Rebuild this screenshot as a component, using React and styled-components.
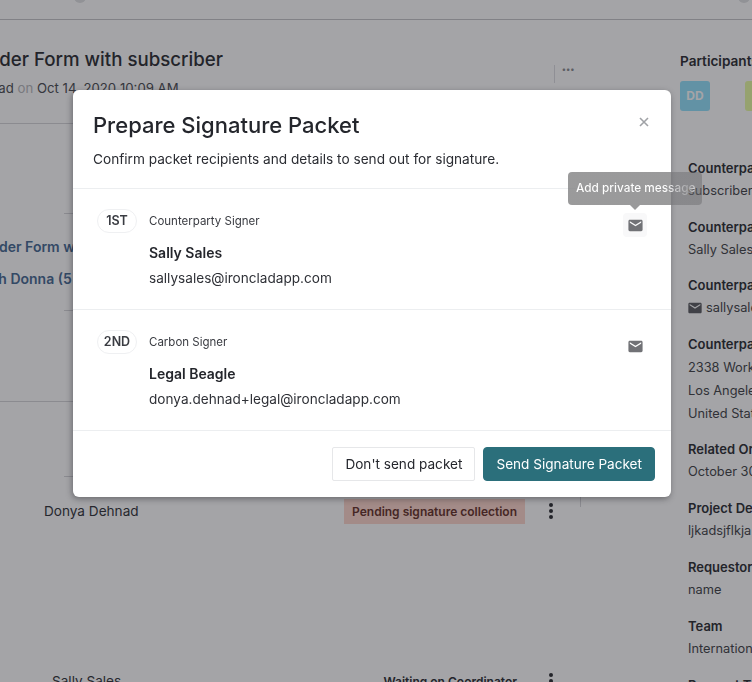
import React from "react";
import styled, { createGlobalStyle } from "styled-components";

const GlobalStyle = createGlobalStyle`
  html, body {
    margin: 0;
    height: 100%;
    overflow: hidden;
    background: #fff;
    font-family: Inter, "Noto Sans", sans-serif;
    color: #24262c;
  }
  * { box-sizing: border-box; }
`;

const Page = styled.div`
  width: 752px;
  height: 682px;
  overflow: hidden;
`;

const TopBar = styled.div`
  display: flex;
  justify-content: space-between;
  height: 20px;
  padding: 0 2px 0 74px;
  border-bottom: 1px solid #c4c4c8;
`;

const StepDot = styled.div`
  width: 12px;
  height: 12px;
  margin-top: -9px;
  border-radius: 50%;
  background: #dfe0e2;
`;

const Body = styled.div`
  display: flex;
`;

const Main = styled.div`
  width: 680px;
  flex-shrink: 0;
`;

const Header = styled.div`
  display: flex;
  justify-content: space-between;
  width: 581px;
  height: 104px;
  padding-top: 28px;
  border-bottom: 1px solid #d4d4d8;
`;

const TitleBlock = styled.div`
  margin-left: ${(p) => p.$offset}px;
  white-space: nowrap;
`;

const Title = styled.h1`
  margin: 0;
  font-size: 18.7px;
  line-height: 24px;
  font-weight: 500;
  color: #24262c;
`;

const Meta = styled.div`
  margin: 6px 0 0 -56px;
  font-size: 13.2px;
  line-height: 20px;
  color: #45474d;

  span {
    color: #b5b6ba;
  }
`;

const HeaderMenu = styled.div`
  width: 27px;
  height: 18px;
  margin-top: 17px;
  padding-left: 7px;
  border-left: 1px solid #dcdce0;
  color: #85878c;
  font-size: 8px;
  line-height: 8px;
  font-weight: 700;
  letter-spacing: 0.5px;
`;

const Section = styled.div`
  width: ${(p) => 581 - (p.$inset || 0)}px;
  height: ${(p) => p.$height}px;
  margin-left: ${(p) => p.$inset || 0}px;
  padding-top: ${(p) => p.$pad || 0}px;
  border-bottom: 1px solid #d4d4d8;
`;

const LinkRow = styled.a`
  display: block;
  margin-left: ${(p) => p.$offset}px;
  margin-bottom: 12px;
  font-size: 14px;
  line-height: 20px;
  font-weight: 600;
  color: #3f6590;
  white-space: nowrap;
`;

const PersonRow = styled.div`
  position: relative;
  display: flex;
  align-items: center;
  height: ${(p) => p.$height}px;
  width: 581px;

  /* the column rule only peeks out below the dialog */
  &::after {
    content: "";
    display: ${(p) => (p.$divider ? "block" : "none")};
    position: absolute;
    top: 0;
    right: 0;
    width: 1px;
    height: 30px;
    background: #d4d4d8;
  }
`;

const PersonName = styled.div`
  width: ${(p) => p.$width}px;
  padding-left: ${(p) => p.$indent}px;
  font-size: 13.6px;
  color: #2a2c32;
  white-space: nowrap;
`;

const StatusCell = styled.div`
  width: 213px;
  display: flex;
  align-items: center;
  justify-content: flex-end;
`;

const StatusTag = styled.div`
  padding: 0 8px;
  font-size: 12px;
  line-height: 25px;
  font-weight: 600;
  white-space: nowrap;
  color: ${(p) => (p.$pending ? "#5f2a22" : "#24262c")};
  background: ${(p) => (p.$pending ? "#fdd5ca" : "transparent")};
`;

const Kebab = styled.div`
  display: flex;
  flex-direction: column;
  gap: 2px;
  margin-left: 24px;

  i {
    width: 4px;
    height: 4px;
    border-radius: 50%;
    background: #24262c;
  }
`;

const Sidebar = styled.aside`
  flex-shrink: 0;
  width: 72px;
  padding-top: 33px;
  white-space: nowrap;
`;

const SideHeading = styled.div`
  font-size: 13.6px;
  line-height: 16px;
  font-weight: 600;
  color: #24262c;
`;

const Avatars = styled.div`
  display: flex;
  gap: 35px;
  margin: 12px 0 47px;
`;

const Avatar = styled.div`
  flex-shrink: 0;
  width: 30px;
  height: 30px;
  border-radius: 3px;
  background: ${(p) => p.$color};
  color: #fff;
  font-size: 12px;
  font-weight: 700;
  line-height: 30px;
  text-align: center;
`;

const Fields = styled.div`
  padding-left: 8px;
`;

const Field = styled.div`
  margin-bottom: ${(p) => p.$gap ?? 16}px;
`;

const FieldLabel = styled.div`
  font-size: 13px;
  line-height: 20px;
  font-weight: 600;
  color: #24262c;
`;

const FieldValue = styled.div`
  display: flex;
  align-items: center;
  gap: 3px;
  margin-top: 3px;
  font-size: 12.8px;
  line-height: 20px;
  color: #3a3c42;

  svg {
    flex-shrink: 0;
    margin-left: -1px;
    color: #55575c;
  }
`;

const FieldLine = styled.div`
  font-size: 12.8px;
  line-height: 23px;
  color: #3a3c42;

  ${FieldLabel} + & {
    margin-top: 2px;
  }
`;

const Backdrop = styled.div`
  position: fixed;
  inset: 0;
  padding: 90px 0 0 73px;
  background: rgba(33, 35, 42, 0.41);
`;

const Modal = styled.div`
  width: 598px;
  height: 407px;
  background: #fff;
  border-radius: 6px;
  box-shadow: -1px 2px 6px rgba(20, 20, 25, 0.4);
`;

const ModalHeader = styled.div`
  position: relative;
  height: 99px;
  padding: 20px 20px 0;
  border-bottom: 1px solid #eceef0;
`;

const ModalTitle = styled.h2`
  margin: 0;
  font-size: 22px;
  line-height: 30px;
  font-weight: 500;
  color: #24262c;
`;

const ModalSubtitle = styled.p`
  margin: 9px 0 0;
  font-size: 13.65px;
  line-height: 20px;
  color: #2a2c32;
`;

const CloseButton = styled.button`
  position: absolute;
  top: 26px;
  right: 21px;
  display: flex;
  padding: 0;
  border: 0;
  background: none;
  color: #a0a2a6;
`;

const Recipient = styled.div`
  display: grid;
  grid-template-columns: 40px 1fr 24px;
  column-gap: 12px;
  height: 121px;
  padding: 20px 24px 0;
  border-bottom: 1px solid #eceef0;
`;

const Badge = styled.div`
  height: 24px;
  border: 1px solid #eff0f2;
  border-radius: 12px;
  font-size: 12.5px;
  line-height: 22px;
  font-weight: 600;
  text-align: center;
  color: #3a3c42;
`;

const RecipientInfo = styled.div`
  padding-top: 3px;
`;

const RecipientRole = styled.div`
  font-size: 11.5px;
  line-height: 18px;
  color: #3a3c42;
`;

const RecipientName = styled.div`
  margin-top: 13px;
  font-size: 14px;
  line-height: 20px;
  font-weight: 600;
  color: #24262c;
`;

const RecipientEmail = styled.div`
  margin-top: 5px;
  font-size: 13.6px;
  line-height: 20px;
  color: #2f3137;
`;

const MessageButton = styled.button`
  position: relative;
  display: flex;
  align-items: center;
  justify-content: center;
  width: 24px;
  height: 24px;
  margin-top: 4px;
  padding: 0;
  border: 0;
  border-radius: 4px;
  background: ${(p) => (p.$active ? "#f8f8f9" : "transparent")};
  color: #717276;
`;

const Tooltip = styled.div`
  position: absolute;
  top: -41px;
  left: -55px;
  width: 134px;
  height: 33px;
  padding-left: 8px;
  border-radius: 4px;
  background: linear-gradient(90deg, rgba(132, 132, 133, 0.82) 103px, rgba(109, 109, 112, 0.5) 103px);
  font-family: Inter, sans-serif;
  font-size: 11.8px;
  font-weight: 500;
  line-height: 33px;
  text-align: left;
  white-space: nowrap;
  color: #fff;

  &::after {
    content: "";
    position: absolute;
    top: 33px;
    left: 62px;
    border: 5px solid transparent;
    border-top-color: rgba(132, 132, 133, 0.82);
    border-bottom: 0;
  }
`;

const TooltipText = styled.span`
  background: linear-gradient(90deg, #fff 0 88px, #bcbcbe 104px, #a8a8aa 112px, #d0d0d2 118px);
  -webkit-background-clip: text;
  background-clip: text;
  color: transparent;
`;

const ModalFooter = styled.div`
  display: flex;
  justify-content: flex-end;
  gap: 8px;
  padding: 16px 16px 0;
`;

const Button = styled.button`
  height: 34px;
  padding: 0 12px;
  font-family: inherit;
  font-size: 13.6px;
  border-radius: ${(p) => (p.$primary ? "4px" : "2px")};
  border: 1px solid ${(p) => (p.$primary ? "#2b6f7b" : "#e6e7e9")};
  background: ${(p) => (p.$primary ? "#2b6f7b" : "#fff")};
  color: ${(p) => (p.$primary ? "#fff" : "#24262c")};
`;

const MailIcon = ({ size = 17 }) => (
  <svg width={size} height={size} viewBox="0 0 24 24" fill="currentColor">
    <path d="M20 4H4c-1.1 0-2 .9-2 2v12c0 1.1.9 2 2 2h16c1.1 0 2-.9 2-2V6c0-1.1-.9-2-2-2zm0 4l-8 5-8-5V6l8 5 8-5v2z" />
  </svg>
);

const CloseIcon = () => (
  <svg width="12" height="12" viewBox="0 0 12 12" fill="none" stroke="currentColor" strokeWidth="1.6">
    <path d="M2 2l8 8M10 2l-8 8" />
  </svg>
);

const recipients = [
  { order: "1ST", role: "Counterparty Signer", name: "Sally Sales", email: "sallysales@ironcladapp.com", active: true },
  { order: "2ND", role: "Carbon Signer", name: "Legal Beagle", email: "donya.dehnad+legal@ironcladapp.com" },
];

const App = () => (
  <>
    <GlobalStyle />
    <Page>
      <TopBar>
        <StepDot />
        <StepDot />
      </TopBar>
      <Body>
        <Main>
          <Header>
            <TitleBlock $offset={-22}>
              <Title>Order Form with subscriber</Title>
              <Meta>
                Donya Dehnad <span>on</span> Oct 14, 2020 10:09 AM
              </Meta>
            </TitleBlock>
            <HeaderMenu>•••</HeaderMenu>
          </Header>
          <Section $height={90} $inset={64} />
          <Section $height={97} $inset={64} $pad={23}>
            <LinkRow $offset={-81}>Order Form with subscriber</LinkRow>
            <LinkRow $offset={-145}>Meeting with Donna (5 min)</LinkRow>
          </Section>
          <Section $height={91} />
          <Section $height={75} $inset={64} />
          <PersonRow $height={68} $divider>
            <PersonName $width={340} $indent={44}>Donya Dehnad</PersonName>
            <StatusCell>
              <StatusTag $pending>Pending signature collection</StatusTag>
              <Kebab>
                <i />
                <i />
                <i />
              </Kebab>
            </StatusCell>
          </PersonRow>
          <PersonRow $height={272}>
            <PersonName $width={340} $indent={52}>Sally Sales</PersonName>
            <StatusCell>
              <StatusTag>Waiting on Coordinator</StatusTag>
              <Kebab>
                <i />
                <i />
                <i />
              </Kebab>
            </StatusCell>
          </PersonRow>
        </Main>
        <Sidebar>
          <SideHeading>Participants</SideHeading>
          <Avatars>
            <Avatar $color="#8fe0fb">DD</Avatar>
            <Avatar $color="#e8fba0">SS</Avatar>
          </Avatars>
          <Fields>
            <Field>
              <FieldLabel>Counterparty</FieldLabel>
              <FieldValue>subscriber</FieldValue>
            </Field>
            <Field $gap={15}>
              <FieldLabel>Counterparty</FieldLabel>
              <FieldValue>Sally Sales</FieldValue>
            </Field>
            <Field>
              <FieldLabel>Counterparty</FieldLabel>
              <FieldValue>
                <MailIcon size={16} />
                sallysales
              </FieldValue>
            </Field>
            <Field $gap={14}>
              <FieldLabel>Counterparty</FieldLabel>
              <FieldLine>2338 Work</FieldLine>
              <FieldLine>Los Angeles</FieldLine>
              <FieldLine>United States</FieldLine>
            </Field>
            <Field>
              <FieldLabel>Related Order</FieldLabel>
              <FieldValue>October 30</FieldValue>
            </Field>
            <Field>
              <FieldLabel>Project Desc</FieldLabel>
              <FieldValue>ljkadsjflkja</FieldValue>
            </Field>
            <Field>
              <FieldLabel>Requestor</FieldLabel>
              <FieldValue>name</FieldValue>
            </Field>
            <Field>
              <FieldLabel>Team</FieldLabel>
              <FieldValue>International</FieldValue>
            </Field>
            <Field $gap={0}>
              <FieldLabel>Request Type</FieldLabel>
            </Field>
          </Fields>
        </Sidebar>
      </Body>
    </Page>
    <Backdrop>
      <Modal>
        <ModalHeader>
          <ModalTitle>Prepare Signature Packet</ModalTitle>
          <ModalSubtitle>Confirm packet recipients and details to send out for signature.</ModalSubtitle>
          <CloseButton>
            <CloseIcon />
          </CloseButton>
        </ModalHeader>
        {recipients.map((r) => (
          <Recipient key={r.order}>
            <Badge>{r.order}</Badge>
            <RecipientInfo>
              <RecipientRole>{r.role}</RecipientRole>
              <RecipientName>{r.name}</RecipientName>
              <RecipientEmail>{r.email}</RecipientEmail>
            </RecipientInfo>
            <MessageButton $active={r.active}>
              <MailIcon />
              {r.active && (
                <Tooltip>
                  <TooltipText>Add private message</TooltipText>
                </Tooltip>
              )}
            </MessageButton>
          </Recipient>
        ))}
        <ModalFooter>
          <Button>Don't send packet</Button>
          <Button $primary>Send Signature Packet</Button>
        </ModalFooter>
      </Modal>
    </Backdrop>
  </>
);

export default App;
